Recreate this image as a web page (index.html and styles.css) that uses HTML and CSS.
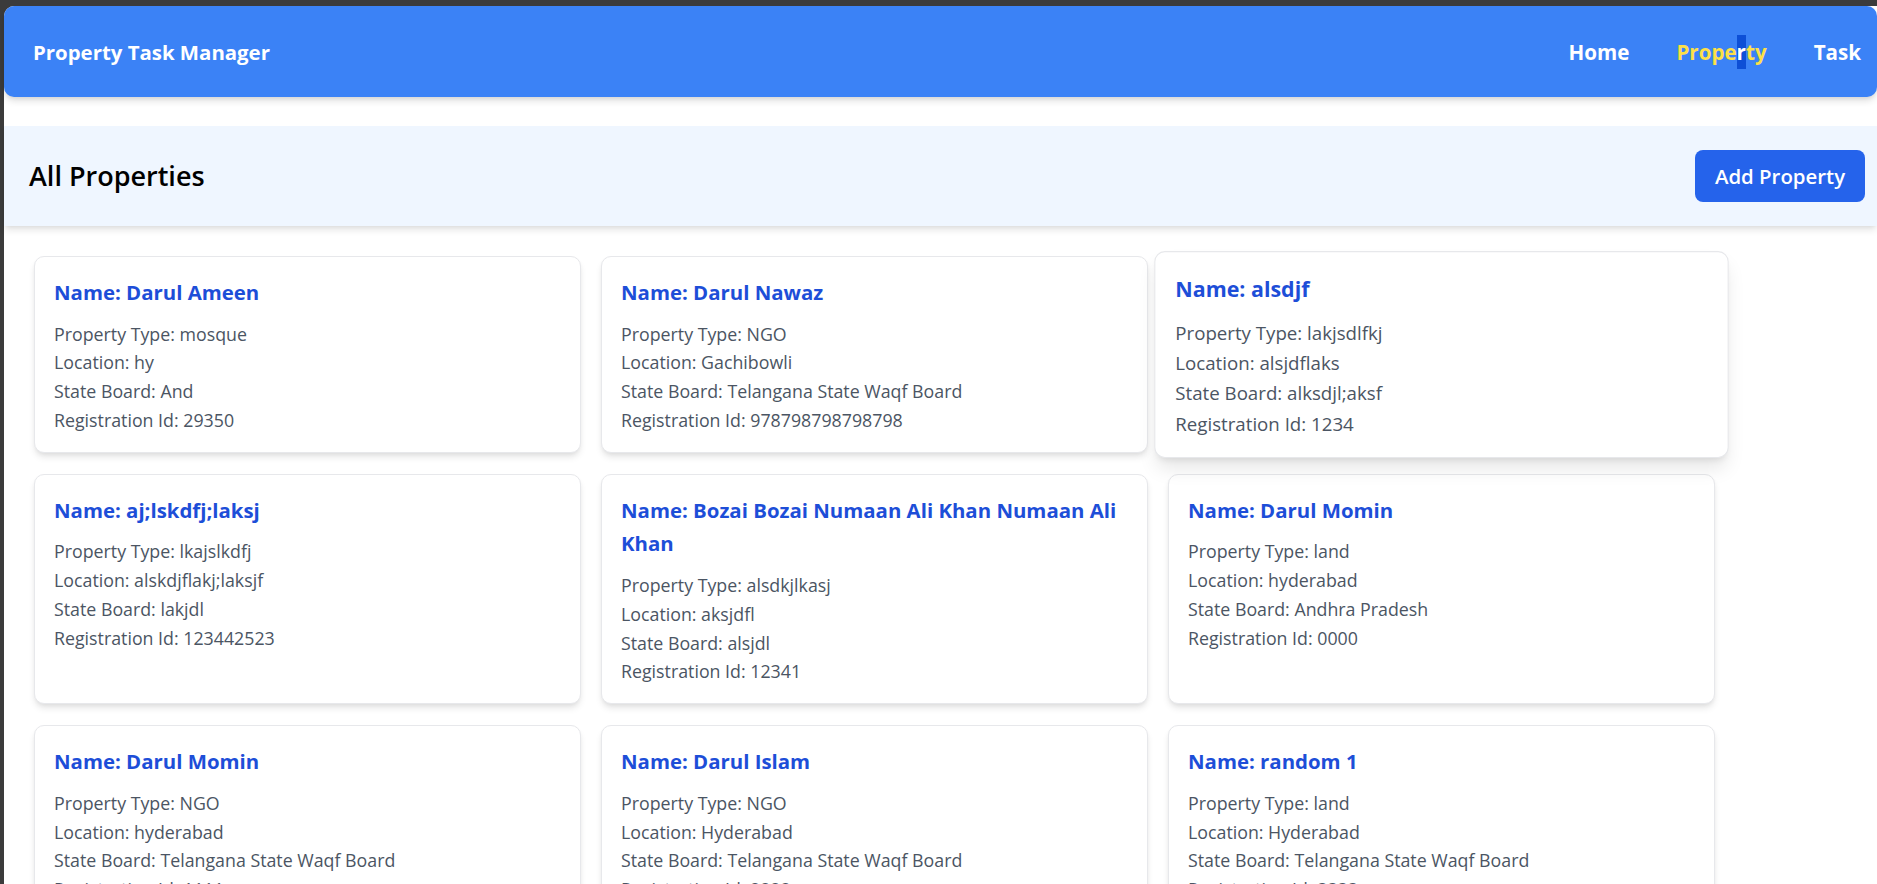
FILE: index.html
```html
<!DOCTYPE html>
<html lang="en">
<head>
<meta charset="utf-8">
<title>Property Task Manager</title>
<link rel="stylesheet" href="styles.css">
</head>
<body>
<div class="app">
  <nav class="navbar">
    <div class="brand">Property Task Manager</div>
    <div class="nav-links">
      <a class="nav-link" href="#">Home</a>
      <a class="nav-link active" href="#">Prope<span class="sel">r</span>ty</a>
      <a class="nav-link" href="#">Task</a>
    </div>
  </nav>

  <section class="page-header">
    <h1 class="page-title">All Properties</h1>
    <button class="add-btn" type="button">Add Property</button>
  </section>

  <main class="grid">
    <div class="card">
      <h2 class="card-title">Name: Darul Ameen</h2>
      <p class="card-line">Property Type: mosque</p>
      <p class="card-line">Location: hy</p>
      <p class="card-line">State Board: And</p>
      <p class="card-line">Registration Id: 29350</p>
    </div>
    <div class="card">
      <h2 class="card-title">Name: Darul Nawaz</h2>
      <p class="card-line">Property Type: NGO</p>
      <p class="card-line">Location: Gachibowli</p>
      <p class="card-line">State Board: Telangana State Waqf Board</p>
      <p class="card-line">Registration Id: 978798798798798</p>
    </div>
    <div class="card hovered">
      <h2 class="card-title">Name: alsdjf</h2>
      <p class="card-line">Property Type: lakjsdlfkj</p>
      <p class="card-line">Location: alsjdflaks</p>
      <p class="card-line">State Board: alksdjl;aksf</p>
      <p class="card-line">Registration Id: 1234</p>
    </div>
    <div class="card">
      <h2 class="card-title">Name: aj;lskdfj;laksj</h2>
      <p class="card-line">Property Type: lkajslkdfj</p>
      <p class="card-line">Location: alskdjflakj;laksjf</p>
      <p class="card-line">State Board: lakjdl</p>
      <p class="card-line">Registration Id: 123442523</p>
    </div>
    <div class="card">
      <h2 class="card-title">Name: Bozai Bozai Numaan Ali Khan Numaan Ali Khan</h2>
      <p class="card-line">Property Type: alsdkjlkasj</p>
      <p class="card-line">Location: aksjdfl</p>
      <p class="card-line">State Board: alsjdl</p>
      <p class="card-line">Registration Id: 12341</p>
    </div>
    <div class="card">
      <h2 class="card-title">Name: Darul Momin</h2>
      <p class="card-line">Property Type: land</p>
      <p class="card-line">Location: hyderabad</p>
      <p class="card-line">State Board: Andhra Pradesh</p>
      <p class="card-line">Registration Id: 0000</p>
    </div>
    <div class="card">
      <h2 class="card-title">Name: Darul Momin</h2>
      <p class="card-line">Property Type: NGO</p>
      <p class="card-line">Location: hyderabad</p>
      <p class="card-line">State Board: Telangana State Waqf Board</p>
      <p class="card-line">Registration Id: 1111</p>
    </div>
    <div class="card">
      <h2 class="card-title">Name: Darul Islam</h2>
      <p class="card-line">Property Type: NGO</p>
      <p class="card-line">Location: Hyderabad</p>
      <p class="card-line">State Board: Telangana State Waqf Board</p>
      <p class="card-line">Registration Id: 2222</p>
    </div>
    <div class="card">
      <h2 class="card-title">Name: random 1</h2>
      <p class="card-line">Property Type: land</p>
      <p class="card-line">Location: Hyderabad</p>
      <p class="card-line">State Board: Telangana State Waqf Board</p>
      <p class="card-line">Registration Id: 3333</p>
    </div>
  </main>
</div>
</body>
</html>
```

FILE: styles.css
```css
* {
  box-sizing: border-box;
}

html, body {
  margin: 0;
  padding: 0;
  height: 100%;
  overflow: hidden;
}

body {
  background: #3b3b3b;
  font-family: "Open Sans", "Noto Sans", sans-serif;
  color: #111;
}

.app {
  margin: 6px 0 0 4px;
  background: #ffffff;
  min-height: calc(100% - 6px);
  border-top-left-radius: 10px;
}

.navbar {
  height: 91px;
  display: flex;
  align-items: center;
  justify-content: space-between;
  padding: 0 16px 0 29px;
  background: #3b82f6;
  border-radius: 10px;
  box-shadow: 0 5px 7px -1px rgba(0, 0, 0, 0.12), 0 2px 5px -2px rgba(0, 0, 0, 0.1);
  position: relative;
  z-index: 2;
}

.brand {
  color: #ffffff;
  font-weight: 700;
  font-size: 20.4px;
  line-height: 30px;
}

.nav-links {
  display: flex;
  gap: 47px;
  align-items: center;
}

.nav-link {
  color: #ffffff;
  text-decoration: none;
  font-weight: 700;
  font-size: 20.6px;
  line-height: 30px;
}

.nav-link.active {
  color: #fde047;
}

.sel {
  background: #0d4fd6;
  color: #ffffff;
  padding: 3px 0;
}

.page-header {
  margin-top: 29px;
  height: 100px;
  display: flex;
  align-items: center;
  justify-content: space-between;
  padding: 0 12px 0 25px;
  background: #eff6ff;
  box-shadow: 0 5px 7px -1px rgba(0, 0, 0, 0.1), 0 2px 5px -2px rgba(0, 0, 0, 0.08);
  position: relative;
  z-index: 1;
}

.page-title {
  margin: 0;
  font-size: 27px;
  font-weight: 600;
  color: #000;
  line-height: 34px;
}

.add-btn {
  width: 170px;
  height: 52px;
  border: none;
  border-radius: 8px;
  background: #2563eb;
  color: #ffffff;
  font-family: inherit;
  font-size: 20.4px;
  font-weight: 600;
  cursor: pointer;
  padding: 0;
}

.grid {
  display: grid;
  grid-template-columns: repeat(3, 547px);
  column-gap: 20px;
  row-gap: 21px;
  padding: 30px 0 0 30px;
}

.card {
  background: #ffffff;
  border: 1px solid #e7e8eb;
  border-radius: 10px;
  padding: 19px 19px 17px 19px;
  box-shadow: 0 5px 7px -1px rgba(0, 0, 0, 0.1), 0 2px 5px -2px rgba(0, 0, 0, 0.08);
}

.card.hovered {
  transform: scale(1.05);
  box-shadow: 0 12px 18px -3px rgba(0, 0, 0, 0.1), 0 5px 7px -4px rgba(0, 0, 0, 0.1);
}

.card-title {
  margin: 0 0 10px 0;
  font-size: 20.4px;
  line-height: 33.6px;
  font-weight: 700;
  color: #1d4ed8;
}

.card-line {
  margin: 0;
  font-size: 17.8px;
  line-height: 28.8px;
  color: #4b5563;
}
```
